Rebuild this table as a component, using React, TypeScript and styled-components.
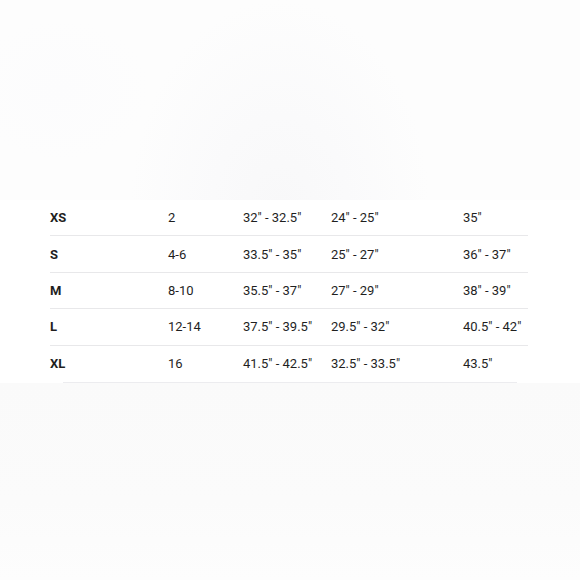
import React from 'react';
import styled, { createGlobalStyle } from 'styled-components';

const GlobalStyle = createGlobalStyle`
  html, body { margin: 0; padding: 0; background: #fdfdfd; }
  #root { height: 580px; }
  * { box-sizing: border-box; }
`;

const rows = [
  { size: 'XS', us: '2', bust: '32" - 32.5"', waist: '24" - 25"', hip: '35"' },
  { size: 'S', us: '4-6', bust: '33.5" - 35"', waist: '25" - 27"', hip: '36" - 37"' },
  { size: 'M', us: '8-10', bust: '35.5" - 37"', waist: '27" - 29"', hip: '38" - 39"' },
  { size: 'L', us: '12-14', bust: '37.5" - 39.5"', waist: '29.5" - 32"', hip: '40.5" - 42"' },
  { size: 'XL', us: '16', bust: '41.5" - 42.5"', waist: '32.5" - 33.5"', hip: '43.5"' },
];

export default function App() {
  return (
    <>
      <GlobalStyle />
      <Page>
        <Backdrop />
        <Band>
          <Table>
            {rows.map((r, i) => (
              <Row key={r.size} $last={i === rows.length - 1}>
                <SizeCell>{r.size}</SizeCell>
                <Cell>{r.us}</Cell>
                <Cell>{r.bust}</Cell>
                <Cell>{r.waist}</Cell>
                <Cell>{r.hip}</Cell>
              </Row>
            ))}
          </Table>
          <EndRule />
        </Band>
        <Footer />
      </Page>
    </>
  );
}

const Page = styled.div`
  height: 580px;
  display: flex;
  flex-direction: column;
  font-family: Roboto, "Liberation Sans", Arial, sans-serif;
  color: #1f1f1f;
`;

const Backdrop = styled.div`
  height: 200px;
  flex-shrink: 0;
  background:
    radial-gradient(ellipse 150px 210px at 280px 210px, #f8f8f9 0%, #fafafb 45%, rgba(252,252,253,0) 100%),
    radial-gradient(ellipse 90px 70px at 60px 90px, #fcfcfd 0%, rgba(253,253,253,0) 100%),
    #fdfdfd;
`;

const Band = styled.div`
  background: #ffffff;
  padding: 0 52px 0 50px;
`;

const Table = styled.div`
  display: flex;
  flex-direction: column;
`;

const Row = styled.div<{ $last?: boolean }>`
  display: grid;
  grid-template-columns: 118px 75px 88px 132px 1fr;
  align-items: center;
  height: 36.4px;
  border-bottom: ${p => (p.$last ? 'none' : '1px solid #e8e8ea')};
`;

const Cell = styled.div`
  font-size: 13px;
  font-weight: 400;
  line-height: 1;
  white-space: nowrap;
`;

const SizeCell = styled(Cell)`
  font-weight: 700;
`;

const EndRule = styled.div`
  height: 1px;
  margin: 0 11px 0 13px;
  background: #ececef;
`;

const Footer = styled.div`
  flex: 1;
  background: linear-gradient(180deg, #fafafa 0%, #fbfbfb 60%, #fdfdfd 100%);
`;
